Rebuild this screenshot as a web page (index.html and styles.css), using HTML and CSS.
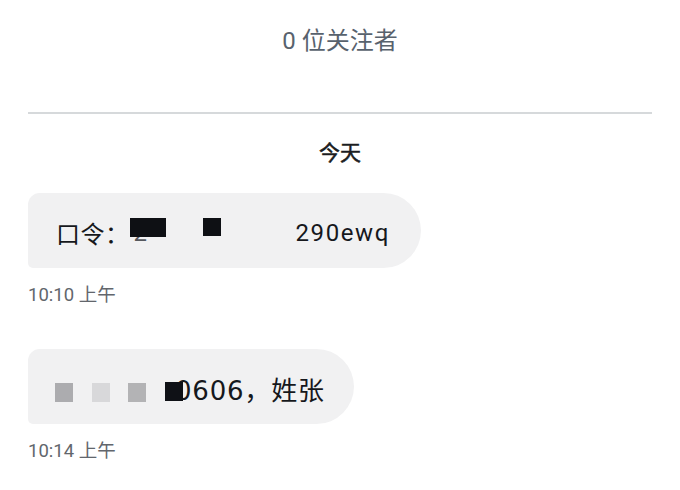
FILE: index.html
```html
<!DOCTYPE html>
<html lang="zh">
<head>
<meta charset="utf-8">
<link rel="stylesheet" href="styles.css">
</head>
<body>
<div class="page">
  <header class="followers">0 位关注者</header>
  <hr class="divider">
  <div class="day">今天</div>
  <div class="msg">
    <div class="bubble bubble-1">
      <span class="cjk1">口令：</span><span class="covered c2">2<span class="redact r-wide"></span></span><span class="gap g1"></span><span class="redact r-small"></span><span class="gap g2"></span><span class="latin1">290ewq</span>
    </div>
    <div class="time">10:10 上午</div>
  </div>
  <div class="msg">
    <div class="bubble bubble-2">
      <span class="redact blur grey1"></span><span class="gap g19"></span><span class="redact blur grey2"></span><span class="gap g18"></span><span class="redact blur grey3"></span><span class="gap g29"></span><span class="covered tail">0606，姓张<span class="redact dark"></span></span>
    </div>
    <div class="time">10:14 上午</div>
  </div>
</div>
</body>
</html>
```

FILE: styles.css
```css
* { box-sizing: border-box; }
html, body {
  margin: 0;
  padding: 0;
  background: #ffffff;
}
body {
  font-family: Roboto, "Noto Sans CJK SC", sans-serif;
  color: #16181c;
}
.page {
  padding: 0 28px;
  display: flex;
  flex-direction: column;
  align-items: flex-start;
}
.followers {
  align-self: stretch;
  height: 82px;
  line-height: 82px;
  text-align: center;
  font-size: 24px;
  color: #58626d;
}
.divider {
  align-self: stretch;
  border: 0;
  height: 2px;
  background: #d6d9db;
  margin: 30px 0 0 0;
}
.day {
  align-self: stretch;
  text-align: center;
  font-size: 21px;
  font-weight: 400;
  -webkit-text-stroke: 0.5px #1b1d21;
  line-height: 28px;
  margin-top: 25px;
  color: #1b1d21;
}
.msg {
  display: flex;
  flex-direction: column;
  align-items: flex-start;
}
.bubble {
  background: #f1f1f2;
  border-radius: 12px 38px 38px 5px;
  height: 75px;
  display: flex;
  align-items: center;
  white-space: nowrap;
  padding-top: 4px;
}
.bubble-1 {
  margin-top: 26px;
  width: 393px;
  padding-left: 28px;
  font-size: 24px;
}
.bubble-2 {
  margin-top: 42px;
  width: 326px;
  padding-left: 27px;
  font-size: 26px;
}
.cjk1 { letter-spacing: 0.5px; }
.latin1 { letter-spacing: 1.6px; margin-left: -2px; }
.time {
  margin-top: 15px;
  font-size: 18.5px;
  line-height: 24px;
  color: #62666c;
}
.redact { display: inline-block; height: 18px; }
.covered { position: relative; }
.c2 {
  display: inline-block;
  width: 36px;
  padding-left: 4px;
  color: #55585d;
}
.r-wide {
  position: absolute;
  left: 0;
  top: -1px;
  width: 36px;
  height: 19px;
  background: #0e1014;
}
.r-small { width: 18px; background: #0e1014; margin-bottom: 12px; }
.gap { display: inline-block; }
.g1 { width: 37px; }
.g2 { width: 77px; }
.g18 { width: 18px; }
.g19 { width: 19px; }
.g29 { width: 29px; }
.blur { width: 18px; height: 19px; filter: blur(0.7px); margin-top: 8px; }
.grey1 { background: #acacaf; }
.grey2 { background: #d8d8da; }
.grey3 { background: #b3b3b5; }
.tail {
  font-family: "DejaVu Sans", "Noto Sans CJK SC", sans-serif;
  font-size: 26px;
  letter-spacing: 0.8px;
}
.dark {
  position: absolute;
  left: -10px;
  top: 12px;
  width: 18px;
  height: 19px;
  background: #0f1116;
  filter: blur(0.4px);
}
```
